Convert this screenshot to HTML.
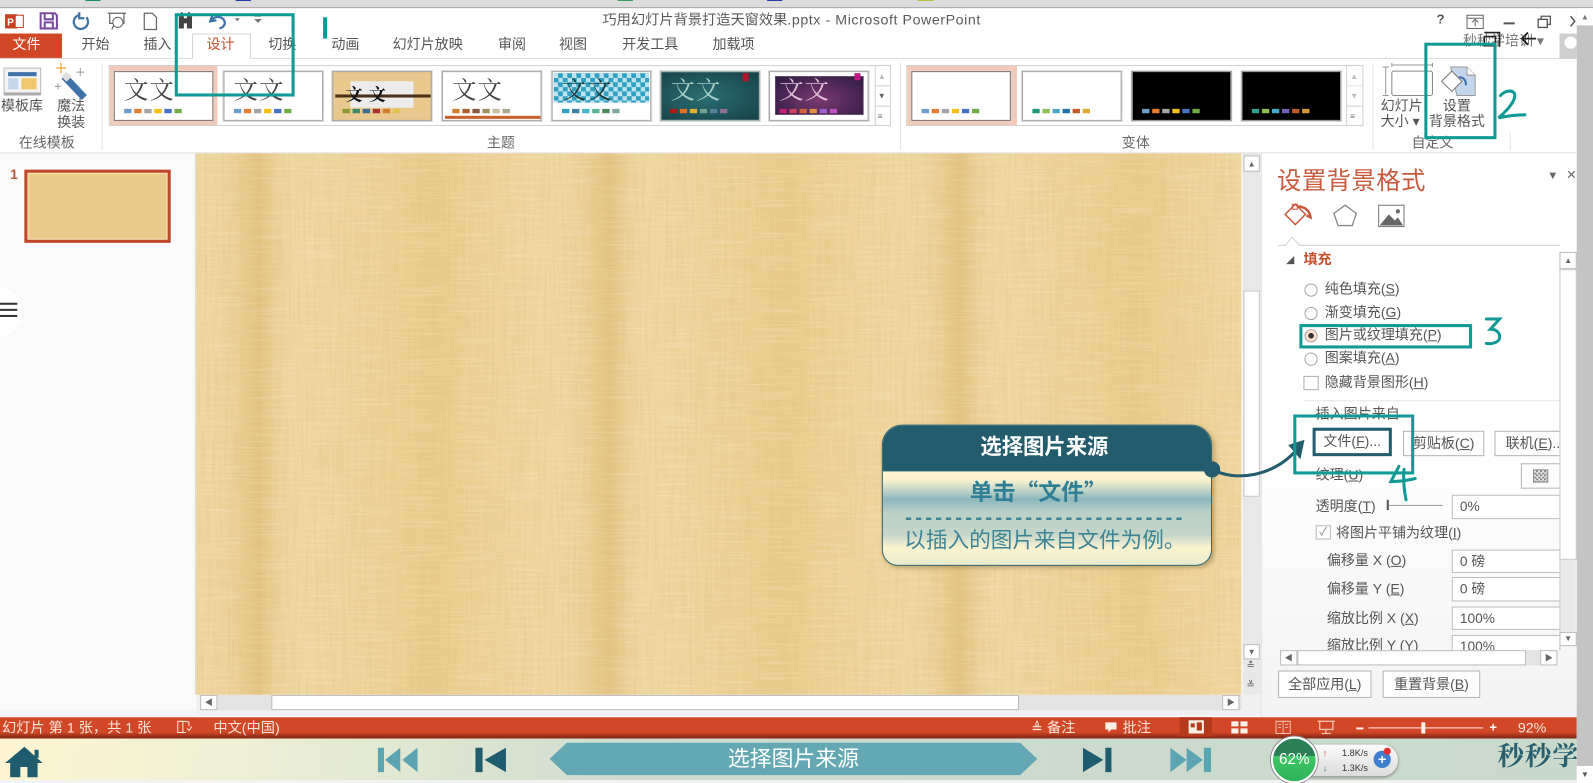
<!DOCTYPE html>
<html lang="zh"><head><meta charset="utf-8"><title>PowerPoint</title>
<style>
html,body{margin:0;padding:0;background:#fff;overflow:hidden;width:1593px;height:783px}
#w{position:absolute;left:0;top:0;width:1568px;height:771px;transform:scale(1.01594);transform-origin:0 0;overflow:hidden;background:#fff;font-family:"Liberation Sans","Noto Sans CJK SC",sans-serif;font-size:13.8px;color:#555;filter:blur(.35px)}
#w div,#w svg{position:absolute}
.t{position:absolute;white-space:nowrap;line-height:16px}
.c{transform:translateX(-50%)}
.u{text-decoration:underline}
.th{border:1px solid #a5a5a5;width:96px;height:47px;background:#fff;overflow:hidden;box-shadow:0 0 0 1px #d8d8d8}
.th b{position:absolute;font:400 24px/28px "Noto Serif CJK SC",serif;left:9px;top:2px;letter-spacing:1px;color:#444;white-space:nowrap}
.s{left:8px;top:36px;height:4.500px;width:60px}
.bx{border:3px solid #0f9a96;box-sizing:border-box}
.btn{border:1px solid #b4b4b4;background:#fdfdfd;box-sizing:border-box;text-align:center;line-height:23px;white-space:nowrap;overflow:hidden}
.ip{border:1px solid #bdbdbd;background:#fff;box-sizing:border-box;left:1429px;width:107px;line-height:21px;padding-left:7px;color:#555;font-size:13.5px}
.rd{width:11px;height:11px;border:1px solid #a4a4a4;border-radius:50%;background:#fff;left:1284px}
.sb{background:#fff;border:1px solid #bbb;box-sizing:border-box;color:#666;text-align:center;font-size:8px;line-height:15px}
.st{color:#fbe5dc;font-size:14px;top:708px}
</style></head><body>
<div id="w">
<!-- top strip -->
<div style="left:0;top:0;width:1568px;height:7px;background:#dcdcdc;border-bottom:1px solid #aaa"></div>
<div style="left:84px;top:0;width:15px;height:1px;background:#1a8f6a"></div>
<div style="left:232px;top:0;width:15px;height:1px;background:#2a3bb0"></div>
<div style="left:608px;top:0;width:15px;height:1px;background:#35a060"></div>
<div style="left:755px;top:0;width:15px;height:1px;background:#2a3bb0"></div>
<div style="left:903px;top:0;width:16px;height:1px;background:#b8c040"></div>
<!-- QAT icons -->
<svg style="left:0;top:9px" width="270" height="24" viewBox="0 0 270 24">
<rect x="5" y="5" width="12" height="14" fill="#c8401f"/><rect x="15" y="6" width="8" height="12" fill="#fff" stroke="#c8401f"/>
<text x="7" y="16" font-size="10" font-weight="700" fill="#fff" font-family="Liberation Sans">P</text>
<path d="M40 4h14l2 2v13H40zM44 4v6h8V4M44 19v-6h8v6" fill="none" stroke="#7a4a9c" stroke-width="2"/>
<path d="M77 6a7 7 0 1 0 8 2M78 3v6h5" fill="none" stroke="#3f72a8" stroke-width="2.200"/>
<path d="M106 4h18M108 4v10h14V4M113 14l-3 6" fill="none" stroke="#666" stroke-width="1.200"/><circle cx="116" cy="13" r="5" fill="#fff" stroke="#666"/>
<path d="M142 4h8l4 4v12h-12z" fill="none" stroke="#666" stroke-width="1.200"/>
<path d="M176 7h5v12h-5zM184 7h5v12h-5zM178 3h2v4h-2zM185 3h2v4h-2zM181 9h3v5h-3z" fill="#444"/>
<path d="M209 6l-2 6 6-1M208 11c4-5 11-4 13 1 1 3-1 6-5 7" fill="none" stroke="#3f72a8" stroke-width="2.200"/>
<path d="M231 9h5l-2.500 3z" fill="#777"/><path d="M251 7h6M251 10h6l-3 3z" fill="#777" stroke="#777" stroke-width=".7"/>
</svg>
<div class="t" style="left:593px;top:11px;font-size:14px;color:#5a5a5a">巧用幻灯片背景打造天窗效果<span style="letter-spacing:.55px">.pptx - Microsoft PowerPoint</span></div>
<!-- window controls -->
<div class="t" style="left:1414px;top:11px;font-weight:700;font-size:13px;color:#555">?</div>
<svg style="left:1440px;top:10px" width="112" height="24" viewBox="0 0 112 24"><path d="M4 5h16v13H4zM4 8h16M12 16v-6M9 12l3-3 3 3" fill="none" stroke="#666"/><path d="M40 13h11" stroke="#555" stroke-width="2"/><path d="M74 9h9v8h-9zM77 9V6h9v8h-3" fill="none" stroke="#555" stroke-width="1.300"/><path d="M106 6l4 5-4 5" fill="none" stroke="#555" stroke-width="1.500"/></svg>
<!-- tabs -->
<div style="left:0;top:33px;width:61px;height:25px;background:#d24726"></div>
<div style="left:189px;top:33px;width:58px;height:25px;background:#fff;border:1px solid #d4d4d4;border-bottom:0;box-sizing:border-box"></div>
<div style="left:0;top:57px;width:189px;height:1px;background:#dcdcdc"></div>
<div style="left:247px;top:57px;width:1305px;height:1px;background:#dcdcdc"></div>
<div class="t c" style="left:26px;top:36px;color:#fff">文件</div>
<div class="t c" style="left:94px;top:36px">开始</div>
<div class="t c" style="left:155px;top:36px">插入</div>
<div class="t c" style="left:217px;top:36px;color:#c8502f">设计</div>
<div class="t c" style="left:278px;top:36px">切换</div>
<div class="t c" style="left:340px;top:36px">动画</div>
<div class="t c" style="left:421px;top:36px">幻灯片放映</div>
<div class="t c" style="left:504px;top:36px">审阅</div>
<div class="t c" style="left:564px;top:36px">视图</div>
<div class="t c" style="left:640px;top:36px">开发工具</div>
<div class="t c" style="left:722px;top:36px">加载项</div>
<div class="t" style="left:1440px;top:33px;color:#777">秒秒学培训 ▾</div>
<div style="left:1535px;top:33px;width:17px;height:25px;background:#cfcfcf;overflow:hidden"><div style="left:5px;top:3px;width:12px;height:12px;border-radius:50%;background:#fff"></div></div>
<svg style="left:1456px;top:29px" width="60" height="22" viewBox="0 0 60 22"><path d="M5 3h15v14M5 7h11v9H5z" fill="none" stroke="#222" stroke-width="1.600"/><path d="M56 9H42M48 3l-6 6 6 6" fill="none" stroke="#222" stroke-width="1.800"/></svg>
<!-- ribbon left -->
<svg style="left:0;top:60px" width="100" height="40" viewBox="0 0 100 40"><rect x="4" y="7" width="36" height="26" fill="#f3f3f3" stroke="#bbb"/><rect x="8" y="11" width="28" height="4" fill="#3f72a8"/><rect x="8" y="17" width="10" height="11" fill="#c3d6ec"/><rect x="21" y="17" width="15" height="11" fill="#f2c76b"/><rect x="4" y="31" width="36" height="3" fill="#aaa"/><path d="M63 15l20 21" stroke="#3f72a8" stroke-width="7"/><path d="M63 13l5 5" stroke="#ddd" stroke-width="7"/><path d="M60 2v10M55 7h10" stroke="#f0b04a" stroke-width="1.400"/><path d="M79 7v8M75 11h8M57 22v6M54 25h6" stroke="#999"/></svg>
<div class="t" style="left:1px;top:97px">模板库</div>
<div class="t c" style="left:70px;top:97px">魔法</div>
<div class="t c" style="left:70px;top:113px">换装</div>
<div class="t c" style="left:46px;top:133px;color:#666">在线模板</div>
<div style="left:100px;top:62px;width:1px;height:86px;background:#e2e2e2"></div>
<div style="left:886px;top:62px;width:1px;height:86px;background:#e2e2e2"></div>
<div style="left:1351px;top:62px;width:1px;height:86px;background:#e2e2e2"></div>
<div style="left:1486px;top:130px;width:1px;height:18px;background:#e2e2e2"></div>
<!-- gallery -->
<div style="left:107px;top:64px;width:770px;height:60px;border:1px solid #d2d2d2;box-sizing:border-box"></div>
<div style="left:108px;top:65px;width:106px;height:58px;background:#f4c9b6"></div>
<div style="left:861px;top:64px;width:1px;height:60px;background:#d2d2d2"></div>
<div style="left:861px;top:84px;width:16px;height:1px;background:#d2d2d2"></div>
<div style="left:861px;top:104px;width:16px;height:1px;background:#d2d2d2"></div>
<div class="t" style="left:864px;top:68px;font-size:8px;color:#bbb">▲</div>
<div class="t" style="left:864px;top:87px;font-size:8px;color:#666">▼</div>
<div class="t" style="left:864px;top:107px;font-size:8px;color:#666">≡</div>
<div class="th" style="left:112px;top:70px;border-color:#8a6a60"><b>文文</b><svg class="s" viewBox="0 0 64 5"><path fill="#6d9dc9" d="M0 0h8v5H0z"/><path fill="#e67e32" d="M11 0h8v5h-8z"/><path fill="#a5a5a5" d="M22 0h8v5h-8z"/><path fill="#f5bf1a" d="M33 0h8v5h-8z"/><path fill="#4472c4" d="M44 0h8v5h-8z"/><path fill="#70ad47" d="M55 0h8v5h-8z"/></svg></div>
<div class="th" style="left:220px;top:70px"><b>文文</b><svg class="s" viewBox="0 0 64 5"><path fill="#6d9dc9" d="M0 0h8v5H0z"/><path fill="#e67e32" d="M11 0h8v5h-8z"/><path fill="#a5a5a5" d="M22 0h8v5h-8z"/><path fill="#f5bf1a" d="M33 0h8v5h-8z"/><path fill="#4472c4" d="M44 0h8v5h-8z"/><path fill="#70ad47" d="M55 0h8v5h-8z"/></svg></div>
<div class="th" style="left:327px;top:70px;background:#e8c88c"><div style="left:17px;top:9px;width:62px;height:26px;background:#ececec"></div><div style="left:2px;top:22px;width:94px;height:3px;background:#4a3018"></div><b style="font-size:17px;font-weight:700;left:12px;top:7px;letter-spacing:6px;color:#111">文文</b><svg class="s" viewBox="0 0 64 5"><path fill="#8a9a30" d="M0 0h8v5H0z"/><path fill="#3a8a6a" d="M11 0h8v5h-8z"/><path fill="#3a6a90" d="M22 0h8v5h-8z"/><path fill="#a83030" d="M33 0h8v5h-8z"/><path fill="#d08030" d="M44 0h8v5h-8z"/><path fill="#e0c050" d="M55 0h8v5h-8z"/></svg></div>
<div class="th" style="left:435px;top:70px"><div style="left:2px;top:43px;width:94px;height:3px;background:#c8602a"></div><b>文文</b><svg class="s" viewBox="0 0 64 5"><path fill="#d08030" d="M0 0h8v5H0z"/><path fill="#b06030" d="M11 0h8v5h-8z"/><path fill="#8a5a40" d="M22 0h8v5h-8z"/><path fill="#a09060" d="M33 0h8v5h-8z"/><path fill="#c8c0a0" d="M44 0h8v5h-8z"/><path fill="#a8a890" d="M55 0h8v5h-8z"/></svg></div>
<div class="th" style="left:543px;top:70px"><div style="left:1px;top:1px;width:94px;height:29px;background:repeating-conic-gradient(#2ea2c0 0 25%,#bfe3ee 0 50%) 0 0/9px 9px"></div><b style="color:#1a3a40">文文</b><svg class="s" viewBox="0 0 64 5"><path fill="#2ea2c0" d="M0 0h8v5H0z"/><path fill="#3f80a8" d="M11 0h8v5h-8z"/><path fill="#40b8c8" d="M22 0h8v5h-8z"/><path fill="#5ab090" d="M33 0h8v5h-8z"/><path fill="#50885a" d="M44 0h8v5h-8z"/><path fill="#80a8a0" d="M55 0h8v5h-8z"/></svg></div>
<div class="th" style="left:650px;top:70px;background:radial-gradient(ellipse at 45% 50%,#2a6f73,#163f48);border-color:#9aa"><div style="left:80px;top:1px;width:6px;height:8px;background:#b01830"></div><b style="color:#a8d0c8">文文</b><svg class="s" viewBox="0 0 64 5" style="left:7px"><path fill="#b01818" d="M0 0h8v5H0z"/><path fill="#e07020" d="M11 0h8v5h-8z"/><path fill="#e0b030" d="M22 0h8v5h-8z"/><path fill="#70a090" d="M33 0h8v5h-8z"/><path fill="#5a8098" d="M44 0h8v5h-8z"/><path fill="#907098" d="M55 0h8v5h-8z"/></svg></div>
<div class="th" style="left:757px;top:70px"><div style="left:5px;top:4px;width:87px;height:38px;background:radial-gradient(ellipse at 50% 60%,#7a3a70,#2a1a40)"></div><div style="left:83px;top:1px;width:6px;height:7px;background:#c01880"></div><b style="color:#e0c0d8">文文</b><svg class="s" viewBox="0 0 64 5" style="left:8px"><path fill="#c02070" d="M0 0h8v5H0z"/><path fill="#d04060" d="M11 0h8v5h-8z"/><path fill="#d06040" d="M22 0h8v5h-8z"/><path fill="#e09040" d="M33 0h8v5h-8z"/><path fill="#a060d0" d="M44 0h8v5h-8z"/><path fill="#c050c0" d="M55 0h8v5h-8z"/></svg></div>
<!-- variants -->
<div style="left:892px;top:64px;width:450px;height:60px;border:1px solid #d2d2d2;box-sizing:border-box"></div>
<div style="left:893px;top:65px;width:108px;height:58px;background:#f4c9b6"></div>
<div style="left:1325px;top:64px;width:1px;height:60px;background:#d2d2d2"></div>
<div style="left:1325px;top:84px;width:17px;height:1px;background:#e4e4e4"></div>
<div style="left:1325px;top:104px;width:17px;height:1px;background:#d2d2d2"></div>
<div class="t" style="left:1329px;top:68px;font-size:8px;color:#bbb">▲</div>
<div class="t" style="left:1329px;top:87px;font-size:8px;color:#bbb">▼</div>
<div class="t" style="left:1329px;top:107px;font-size:8px;color:#666">≡</div>
<div class="th" style="left:897px;top:70px;border-color:#8a6a60"><svg class="s" viewBox="0 0 64 5"><path fill="#6d9dc9" d="M0 0h8v5H0z"/><path fill="#e67e32" d="M11 0h8v5h-8z"/><path fill="#a5a5a5" d="M22 0h8v5h-8z"/><path fill="#f5bf1a" d="M33 0h8v5h-8z"/><path fill="#4472c4" d="M44 0h8v5h-8z"/><path fill="#70ad47" d="M55 0h8v5h-8z"/></svg></div>
<div class="th" style="left:1006px;top:70px"><svg class="s" viewBox="0 0 64 5"><path fill="#1f9a78" d="M0 0h8v5H0z"/><path fill="#8cc050" d="M11 0h8v5h-8z"/><path fill="#48a8c8" d="M22 0h8v5h-8z"/><path fill="#1f70a8" d="M33 0h8v5h-8z"/><path fill="#c05a28" d="M44 0h8v5h-8z"/><path fill="#e0a830" d="M55 0h8v5h-8z"/></svg></div>
<div class="th" style="left:1114px;top:70px;background:#000"><svg class="s" viewBox="0 0 64 5"><path fill="#6d9dc9" d="M0 0h8v5H0z"/><path fill="#e67e32" d="M11 0h8v5h-8z"/><path fill="#a5a5a5" d="M22 0h8v5h-8z"/><path fill="#f5bf1a" d="M33 0h8v5h-8z"/><path fill="#4472c4" d="M44 0h8v5h-8z"/><path fill="#70ad47" d="M55 0h8v5h-8z"/></svg></div>
<div class="th" style="left:1222px;top:70px;background:#000"><svg class="s" viewBox="0 0 64 5"><path fill="#30a090" d="M0 0h8v5H0z"/><path fill="#8cc050" d="M11 0h8v5h-8z"/><path fill="#48a8c8" d="M22 0h8v5h-8z"/><path fill="#7060b8" d="M33 0h8v5h-8z"/><path fill="#c05a28" d="M44 0h8v5h-8z"/><path fill="#d89a30" d="M55 0h8v5h-8z"/></svg></div>
<div class="t c" style="left:493px;top:133px;color:#666">主题</div>
<div class="t c" style="left:1118px;top:133px;color:#666">变体</div>
<div class="t c" style="left:1410px;top:133px;color:#666">自定义</div>
<!-- customise -->
<svg style="left:1360px;top:62px" width="100" height="34" viewBox="0 0 100 34"><path d="M4 4v28M1 4h6M1 32h6M10 2h40M10 0v4M50 0v4" stroke="#999" fill="none"/><rect x="10" y="8" width="40" height="24" rx="2" fill="#fff" stroke="#888"/><path d="M68 4h16l8 8v20H74z" fill="#c3d6ec" stroke="#999"/><path d="M84 4v8h8" fill="#fff" stroke="#999"/><path d="M59 18l10-10 10 10-10 10z" fill="#fff" stroke="#777"/><path d="M76 14c5 0 7 3 7 8" stroke="#3f72a8" stroke-width="2" fill="none"/></svg>
<div class="t" style="left:1359px;top:97px">幻灯片</div>
<div class="t" style="left:1359px;top:112px">大小 ▾</div>
<div class="t c" style="left:1434px;top:97px">设置</div>
<div class="t c" style="left:1434px;top:112px">背景格式</div>
<div style="left:0;top:150px;width:1552px;height:1px;background:#dfdfdf"></div>
<!-- left pane -->
<div style="left:0;top:151px;width:192px;height:555px;background:#fafafa"></div>
<div style="left:192px;top:151px;width:1px;height:533px;background:#d8d8d8"></div>
<div class="t" style="left:10px;top:164px;font-weight:700;color:#c0563c">1</div>
<div style="left:24px;top:167px;width:144px;height:72px;box-sizing:border-box;border:3px solid #c0462c;background:#e9cc8a;box-shadow:inset 0 0 0 1px #f8e8c0"></div>
<div style="left:-26px;top:283px;width:48px;height:48px;border-radius:50%;background:#fff"></div>
<div style="left:0;top:298px;width:17px;height:2px;background:#333"></div>
<div style="left:0;top:304px;width:17px;height:2px;background:#333"></div>
<div style="left:0;top:310px;width:17px;height:2px;background:#333"></div>
<!-- slide texture -->
<svg style="left:193px;top:151px" width="1029" height="533" viewBox="0 0 1029 533">
<defs>
<filter id="a" x="0" y="0" width="100%" height="100%"><feTurbulence type="fractalNoise" baseFrequency="0.35 0.015" numOctaves="3" seed="4"/><feColorMatrix values="0 0 0 0 .74 0 0 0 0 .57 0 0 0 0 .24 1.800 0 0 0 -.72"/></filter>
<filter id="b" x="0" y="0" width="100%" height="100%"><feTurbulence type="fractalNoise" baseFrequency="0.02 0.55" numOctaves="2" seed="9"/><feColorMatrix values="0 0 0 0 1 0 0 0 0 .93 0 0 0 0 .72 1.800 0 0 0 -.78"/></filter>
<linearGradient id="g"><stop offset="0" stop-color="#fff" stop-opacity=".08"/><stop offset=".18" stop-color="#c9a050" stop-opacity=".32"/><stop offset=".3" stop-color="#fff" stop-opacity=".1"/><stop offset=".68" stop-color="#c9a050" stop-opacity=".14"/><stop offset="1" stop-color="#fff" stop-opacity=".08"/></linearGradient>
<pattern id="p" width="345" height="533" patternUnits="userSpaceOnUse"><rect width="345" height="533" fill="url(#g)"/></pattern>
</defs>
<rect width="1029" height="533" fill="#eed295"/><rect width="1029" height="533" fill="url(#p)"/>
<rect width="1029" height="533" filter="url(#a)" opacity=".6"/><rect width="1029" height="533" filter="url(#b)" opacity=".3"/>
</svg>
<!-- main scrollbars -->
<div style="left:1223px;top:151px;width:18px;height:533px;background:#e8e8e8"></div>
<div class="sb" style="left:1224px;top:153px;width:16px;height:16px">▲</div>
<div style="left:1224px;top:286px;width:16px;height:203px;background:#fff;border:1px solid #c8c8c8;box-sizing:border-box"></div>
<div class="sb" style="left:1224px;top:634px;width:16px;height:15px;line-height:13px">▼</div>
<div class="t" style="left:1227px;top:648px;font-size:10px;color:#555">≛</div>
<div class="t" style="left:1227px;top:667px;font-size:10px;color:#555">≚</div>
<div style="left:193px;top:684px;width:1048px;height:21px;background:#f0f0f0"></div>
<div style="left:197px;top:684px;width:1025px;height:15px;background:#e3e3e3"></div>
<div class="sb" style="left:197px;top:684px;width:17px;height:15px;line-height:13px">◀</div>
<div style="left:267px;top:684px;width:736px;height:15px;background:#fff;border:1px solid #bbb;box-sizing:border-box"></div>
<div class="sb" style="left:1203px;top:684px;width:17px;height:15px;line-height:13px">▶</div>
<div style="left:0;top:699px;width:193px;height:7px;background:#f5f5f5"></div>
<!-- right pane -->
<div style="left:1241px;top:151px;width:311px;height:555px;background:linear-gradient(#fff,#fff 50%,#f3f3f3);border-left:1px solid #e0e0e0;box-sizing:border-box"></div>
<div class="t" style="left:1257px;top:165px;font-size:24px;line-height:28px;letter-spacing:.4px;color:#c8593c">设置背景格式</div>
<div class="t" style="left:1523px;top:165px;font-size:11px;color:#666">▼</div>
<div class="t" style="left:1542px;top:165px;font-size:16px;color:#666">×</div>
<svg style="left:1260px;top:198px" width="130" height="30" viewBox="0 0 130 30"><path d="M5 13L15 3l10 10-10 10z" fill="#fff" stroke="#c8593c" stroke-width="1.500"/><path d="M12 3h5v5h-5z" fill="none" stroke="#c8593c"/><path d="M18 5c7 1 11 4 12 11l-4-2" fill="none" stroke="#c8593c" stroke-width="2.500"/><path d="M64 4l11 8-4 12H57l-4-12z" fill="none" stroke="#888" stroke-width="1.300"/><rect x="97" y="4" width="25" height="21" fill="#fff" stroke="#777"/><path d="M98 24l9-11 6 6 3-3 5 8z" fill="#666"/><circle cx="116" cy="10" r="2" fill="#666"/></svg>
<svg style="left:1258px;top:230px" width="278" height="14" viewBox="0 0 278 14"><path d="M0 11.500h7l7-8 7 8h257" fill="none" stroke="#cfcfcf"/></svg>
<div class="t" style="left:1266px;top:249px;font-size:8px;color:#555">◢</div>
<div class="t" style="left:1283px;top:248px;font-weight:700;color:#c8502f">填充</div>
<div class="rd" style="top:279px"></div><div class="t" style="left:1304px;top:277px">纯色填充(<span class="u">S</span>)</div>
<div class="rd" style="top:302px"></div><div class="t" style="left:1304px;top:300px">渐变填充(<span class="u">G</span>)</div>
<div class="rd" style="top:324px;background:radial-gradient(#333 0 2.500px,#fde0d0 3px)"></div><div class="t" style="left:1304px;top:322px">图片或纹理填充(<span class="u">P</span>)</div>
<div class="rd" style="top:347px"></div><div class="t" style="left:1304px;top:345px">图案填充(<span class="u">A</span>)</div>
<div style="left:1283px;top:370px;width:15px;height:14px;border:1px solid #b0b0b0;background:#fff;box-sizing:border-box"></div>
<div class="t" style="left:1304px;top:369px">隐藏背景图形(<span class="u">H</span>)</div>
<div style="left:1284px;top:394px;width:251px;height:1px;background:#e4e4e4"></div>
<div class="t" style="left:1295px;top:400px">插入图片来自</div>
<div class="btn" style="left:1292px;top:421px;width:78px;height:28px;border:3px solid #235c6c;line-height:22px;background:#fff">文件(<span class="u">F</span>)...</div>
<div class="btn" style="left:1381px;top:424px;width:80px;height:25px">剪贴板(<span class="u">C</span>)</div>
<div class="btn" style="left:1471px;top:424px;width:64px;height:25px;border-right:0;text-align:left;padding-left:10px">联机(<span class="u">E</span>)...</div>
<div class="t" style="left:1295px;top:460px">纹理(<span class="u">U</span>)</div>
<div class="btn" style="left:1497px;top:456px;width:38px;height:25px;border-right:0"></div>
<div style="left:1509px;top:462px;width:13px;height:11px;border:1px solid #888;background:repeating-conic-gradient(#888 0 25%,#eee 0 50%) 0 0/4px 4px"></div>
<div class="t" style="left:1295px;top:491px">透明度(<span class="u">T</span>)</div>
<div style="left:1365px;top:492px;width:2px;height:10px;background:#555"></div>
<div style="left:1367px;top:497px;width:53px;height:1px;background:#999"></div>
<div class="ip" style="top:487px;height:24px">0%</div>
<div style="left:1295px;top:517px;width:15px;height:14px;border:1px solid #b8b8b8;background:#fff;box-sizing:border-box;color:#888;font-size:11px;line-height:12px;text-align:center">✓</div>
<div class="t" style="left:1315px;top:517px">将图片平铺为纹理(<span class="u">I</span>)</div>
<div class="t" style="left:1306px;top:544px">偏移量 X (<span class="u">O</span>)</div><div class="ip" style="top:541px;height:23px">0 磅</div>
<div class="t" style="left:1306px;top:572px">偏移量 Y (<span class="u">E</span>)</div><div class="ip" style="top:568px;height:24px">0 磅</div>
<div class="t" style="left:1306px;top:601px">缩放比例 X (<span class="u">X</span>)</div><div class="ip" style="top:597px;height:23px">100%</div>
<div style="left:1290px;top:625px;width:246px;height:15px;overflow:hidden"><div class="t" style="left:16px;top:3px">缩放比例 Y (<span class="u">Y</span>)</div><div class="ip" style="left:139px;top:0;height:24px">100%</div></div>
<!-- pane scrollbars -->
<div style="left:1535px;top:248px;width:16px;height:388px;background:#e9e9e9;border-left:1px solid #c8c8c8;box-sizing:border-box"></div>
<div style="left:1535px;top:265px;width:17px;height:286px;background:#fff;border:1px solid #c8c8c8;box-sizing:border-box"></div>
<div class="sb" style="left:1535px;top:248px;width:17px;height:17px">▲</div>
<div class="sb" style="left:1535px;top:622px;width:17px;height:14px;line-height:12px">▼</div>
<div style="left:1260px;top:640px;width:273px;height:15px;background:#e3e3e3"></div>
<div class="sb" style="left:1260px;top:640px;width:17px;height:15px;line-height:13px">◀</div>
<div style="left:1277px;top:640px;width:225px;height:15px;background:#fff;border:1px solid #bbb;box-sizing:border-box"></div>
<div class="sb" style="left:1516px;top:640px;width:17px;height:15px;line-height:13px">▶</div>
<div class="btn" style="left:1258px;top:660px;width:92px;height:27px;line-height:25px">全部应用(<span class="u">L</span>)</div>
<div class="btn" style="left:1361px;top:660px;width:96px;height:27px;line-height:25px">重置背景(<span class="u">B</span>)</div>
<!-- status bar -->
<div style="left:0;top:706px;width:1552px;height:21px;background:linear-gradient(#d24726 0,#d24726 70%,#7a2410 100%)"></div>
<div class="t st" style="left:2px">幻灯片 第 1 张，共 1 张</div>
<svg style="left:173px;top:708px" width="18" height="16" viewBox="0 0 18 16"><path d="M2 2h5v11H2zM7 2c3 0 5 0 6 1v4M7 13h3" fill="none" stroke="#fbe5dc"/><path d="M11 9l2 2 3-4" fill="none" stroke="#fbe5dc"/></svg>
<div class="t st" style="left:210px">中文(中国)</div>
<div class="t st" style="left:1015px">≜ 备注</div>
<svg style="left:1087px;top:710px" width="13" height="13" viewBox="0 0 13 13"><path d="M1 1h11v7H7l-3 3V8H1z" fill="#fdeee8"/></svg>
<div class="t st" style="left:1105px">批注</div>
<div style="left:1161px;top:706px;width:32px;height:19px;background:#b53a1c"></div>
<svg style="left:1168px;top:707px" width="150" height="18" viewBox="0 0 150 18"><path d="M2 2h15v13H2zM4 5h4v4H4zM10 4h5v8h-5z" fill="#fdeee8" fill-rule="evenodd"/><path d="M44 3h7v5h-7zM53 3h7v5h-7zM44 10h7v5h-7zM53 10h7v5h-7z" fill="#fdeee8"/><path d="M88 3h14v12H88zM95 3v12M90 6h3M90 9h3M97 6h3M97 9h3" fill="none" stroke="#f4c0ac"/><path d="M129 3h17M131 3v8h13V3M137 11v4M133 15h9" fill="none" stroke="#f4c0ac" stroke-width="1.300"/></svg>
<div style="left:1335px;top:716px;width:7px;height:2px;background:#fdeee8"></div>
<div style="left:1347px;top:716px;width:113px;height:1px;background:#fdeee8"></div>
<div style="left:1399px;top:711px;width:4px;height:11px;background:#fdeee8"></div>
<div class="t" style="left:1466px;top:707px;color:#fff;font-weight:700;font-size:13px;line-height:18px">+</div>
<div class="t st" style="left:1494px">92%</div>
<!-- nav bar -->
<div style="left:0;top:727px;width:1552px;height:41px;background:linear-gradient(100deg,#fdf4d2 0,#eef0d4 15%,#cfdccf 40%,#c9d9cc 100%)"></div>
<div style="left:0;top:768px;width:1552px;height:3px;background:#f2f2f2"></div>
<svg style="left:0;top:728px" width="520" height="40" viewBox="0 0 520 40"><path d="M24 7L5 23h5v14h10V27h7v10h10V23h5z" fill="#1f5c6e"/><path d="M34 10h4v8h-4z" fill="#1f5c6e"/><path d="M372 8h6v24h-6zM394 8v24l-15-12zM411 8v24l-15-12z" fill="#5ba5b2"/><path d="M468 8h7v24h-7zM498 8v24l-21-12z" fill="#1f5c6e"/></svg>
<svg style="left:540px;top:731px" width="482" height="33" viewBox="0 0 482 33"><path d="M18 0h446l17 16-17 16H18L1 16z" fill="#64a8b4"/></svg>
<div class="t c" style="left:781px;top:735px;font-size:21.500px;line-height:24px;color:#fff">选择图片来源</div>
<svg style="left:1060px;top:728px" width="140" height="40" viewBox="0 0 140 40"><path d="M6 8v24l20-12zM28 8h6v24h-6z" fill="#1f5c6e"/><path d="M92 8v24l16-12zM108 8v24l16-12zM125 8h7v24h-7z" fill="#5ba5b2"/></svg>
<div class="t" style="left:1474px;top:729px;width:78px;overflow:hidden;font:700 26px/28px 'Noto Serif CJK SC',serif;color:#2a5f70;letter-spacing:1px">秒秒学</div>
<!-- net widget -->
<div style="left:1270px;top:733px;width:106px;height:31px;border-radius:16px;background:linear-gradient(#fbfbfb,#dcdcdc);box-shadow:0 1px 3px #777"></div>
<div style="left:1251px;top:725px;width:46px;height:46px;border-radius:50%;background:linear-gradient(#2a7f55 0,#2a7f55 40%,#3ec765 41%,#2fb25a 100%);border:2px solid #fff;box-sizing:border-box;box-shadow:0 0 0 1px #888"></div>
<div class="t c" style="left:1274px;top:739px;color:#fff;font-size:15px;line-height:18px">62%</div>
<div class="t" style="left:1302px;top:733px;font-size:9px;color:#d04030;font-weight:700">↑</div>
<div class="t" style="left:1302px;top:748px;font-size:9px;color:#2a8050;font-weight:700">↓</div>
<div class="t" style="left:1321px;top:733px;font-size:9px;color:#333">1.8K/s</div>
<div class="t" style="left:1321px;top:748px;font-size:9px;color:#333">1.3K/s</div>
<div style="left:1352px;top:739px;width:17px;height:17px;border-radius:50%;background:#3f7fd0;color:#fff;font:700 14px/16px 'Liberation Sans',sans-serif;text-align:center">+</div>
<div style="left:1362px;top:736px;width:7px;height:7px;border-radius:50%;background:#e03030"></div>
<!-- right scrollbar -->
<div style="left:1552px;top:8px;width:16px;height:763px;background:#c4c4c4"></div>
<div style="left:1552px;top:8px;width:16px;height:17px;background:#fff;color:#777;font-size:8px;line-height:17px;text-align:center">▲</div>
<div style="left:1552px;top:754px;width:16px;height:17px;background:#fff;color:#555;font-size:8px;line-height:17px;text-align:center">▼</div>
<!-- callout -->
<div style="left:868px;top:418px;width:325px;height:139px;border-radius:20px 20px 16px 16px;overflow:hidden;border:1.500px solid #2f6674;box-sizing:border-box;box-shadow:2px 2px 4px rgba(120,90,40,.4);background:linear-gradient(#fdf5d2 0,#fdf5d2 37%,#f2efcf 40%,#8db7bd 53%,#b9cfc6 62%,#c5d5c8 78%,#fbf3cf 88%,#e8ebcf 100%)">
<div style="left:-2px;top:-2px;width:328px;height:47px;background:#235c6c"></div></div>
<div class="t c" style="left:1028px;top:430px;color:#fff;font-weight:700;font-size:21px;line-height:22px">选择图片来源</div>
<div class="t c" style="left:1022px;top:470px;color:#2f7f96;font-weight:700;font-size:22.500px;line-height:26px"><span style="font-family:'Noto Sans CJK SC',sans-serif">单击“文件”</span></div>
<div class="t" style="left:891px;top:500px;width:277px;overflow:hidden;color:#3d8596;font-size:20px;font-weight:700;line-height:20px;letter-spacing:3.200px">----------------------------</div>
<div class="t" style="left:890px;top:520px;color:#3d8596;font-size:21.300px;line-height:24px">以插入的图片来自文件为例。</div>
<svg style="left:1180px;top:420px" width="120" height="60" viewBox="0 0 120 60"><circle cx="13" cy="42" r="8" fill="#235c6c"/><path d="M13 42c22 12 60 8 84-20" fill="none" stroke="#235c6c" stroke-width="3"/><path d="M104 13L88 18l12 14z" fill="#235c6c"/></svg>
<!-- annotations -->
<div class="bx" style="left:172px;top:13px;width:118px;height:82px"></div>
<div style="left:318px;top:17px;width:4px;height:21px;background:#0f9a96"></div>
<div class="bx" style="left:1402px;top:42px;width:71px;height:95px"></div>
<svg style="left:1472px;top:85px" width="32" height="38" viewBox="0 0 32 38"><path d="M5 9C10 3 20 3 19 10 18 17 9 26 3 31c9-2 18-3 26-3" fill="none" stroke="#0f9a96" stroke-width="3" stroke-linecap="round"/></svg>
<div class="bx" style="left:1279px;top:319px;width:170px;height:24px"></div>
<svg style="left:1458px;top:310px" width="24" height="34" viewBox="0 0 24 34"><path d="M5 4h13L9 14c6 0 10 4 9 9-1 4-7 6-13 5" fill="none" stroke="#0f9a96" stroke-width="3" stroke-linecap="round"/></svg>
<div class="bx" style="left:1273px;top:408px;width:119px;height:59px"></div>
<svg style="left:1364px;top:456px" width="34" height="40" viewBox="0 0 34 40"><path d="M13 3L5 18c8 0 16-1 24-3M18 6c-1 10 0 20 2 30" fill="none" stroke="#0f9a96" stroke-width="3" stroke-linecap="round"/></svg>
</div>
</body></html>
